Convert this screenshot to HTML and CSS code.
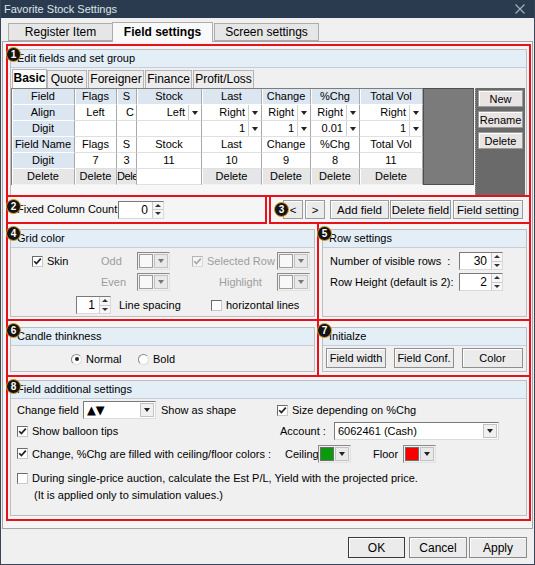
FILE: index.html
```html
<!DOCTYPE html>
<html lang="en">
<head>
    <meta charset="UTF-8">
    <title>Favorite Stock Settings</title>
    <link rel="stylesheet" href="styles.css">
</head>
<body>
<div class="window">
    <div class="titlebar">
        <span class="title">Favorite Stock Settings</span>
        <svg class="close" width="10" height="10" viewBox="0 0 10 10"><path d="M0.5 0.5 L9.5 9.5 M9.5 0.5 L0.5 9.5" stroke="#aab3bf" stroke-width="1.1"/></svg>
    </div>

    <div class="tabs">
        <div class="tab t-reg">Register Item</div>
        <div class="tab t-field active">Field settings</div>
        <div class="tab t-screen">Screen settings</div>
    </div>

    <div class="panel">
        <!-- 1: edit fields -->
        <section class="sec sec1">
            <span class="badge">1</span>
            <div class="group g1">
                <div class="ghead">Edit fields and set group</div>
                <div class="subtabs">
                    <div class="stab active w-basic">Basic</div>
                    <div class="stab w-quote">Quote</div>
                    <div class="stab w-foreign">Foreigner</div>
                    <div class="stab w-finance">Finance</div>
                    <div class="stab w-profit">Profit/Loss</div>
                </div>
                <div class="editor">
                    <div class="gridwrap">
                        <table class="fields">
                            <colgroup>
                                <col style="width:63px"><col style="width:42px"><col style="width:20px"><col style="width:65px">
                                <col style="width:60px"><col style="width:49px"><col style="width:49px"><col style="width:63px">
                            </colgroup>
                            <tr>
                                <td class="hd">Field</td><td class="hd">Flags</td><td class="hd">S</td><td class="hd">Stock</td>
                                <td class="hd">Last</td><td class="hd">Change</td><td class="hd">%Chg</td><td class="hd">Total Vol</td>
                            </tr>
                            <tr>
                                <td class="hd">Align</td><td>Left</td><td class="right">C</td>
                                <td><span class="sel">Left<i class="arr"></i></span></td>
                                <td><span class="sel">Right<i class="arr"></i></span></td>
                                <td><span class="sel">Right<i class="arr"></i></span></td>
                                <td><span class="sel">Right<i class="arr"></i></span></td>
                                <td><span class="sel">Right<i class="arr"></i></span></td>
                            </tr>
                            <tr>
                                <td class="hd">Digit</td><td></td><td></td><td></td>
                                <td><span class="sel">1<i class="arr"></i></span></td>
                                <td><span class="sel">1<i class="arr"></i></span></td>
                                <td><span class="sel">0.01<i class="arr"></i></span></td>
                                <td><span class="sel">1<i class="arr"></i></span></td>
                            </tr>
                            <tr>
                                <td class="hd">Field Name</td><td>Flags</td><td>S</td><td>Stock</td>
                                <td>Last</td><td>Change</td><td>%Chg</td><td>Total Vol</td>
                            </tr>
                            <tr>
                                <td class="hd">Digit</td><td>7</td><td>3</td><td>11</td>
                                <td>10</td><td>9</td><td>8</td><td>11</td>
                            </tr>
                            <tr>
                                <td class="del">Delete</td><td class="del">Delete</td><td class="del clip">Dele</td><td></td>
                                <td class="del">Delete</td><td class="del">Delete</td><td class="del">Delete</td><td class="del">Delete</td>
                            </tr>
                        </table>
                        <div class="graybox"></div>
                    </div>
                    <div class="side">
                        <button class="btn">New</button>
                        <button class="btn">Rename</button>
                        <button class="btn">Delete</button>
                    </div>
                </div>
            </div>
        </section>

        <div class="row">
            <!-- 2: fixed columns -->
            <section class="sec sec2">
                <span class="badge">2</span>
                <span class="lbl-fixed">Fixed Column Count</span>
                <span class="spin w46"><span class="val">0</span><span class="btns"><i class="up"></i><i class="dn"></i></span></span>
            </section>
            <!-- 3: field buttons -->
            <section class="sec sec3">
                <span class="badge b3">3</span>
                <button class="btn b-prev">&lt;</button>
                <button class="btn b-next">&gt;</button>
                <button class="btn b-add">Add field</button>
                <button class="btn b-delf">Delete field</button>
                <button class="btn b-set">Field setting</button>
            </section>
        </div>

        <div class="row">
            <!-- 4: grid color -->
            <section class="sec sec4">
                <span class="badge">4</span>
                <div class="group g4">
                    <div class="ghead">Grid color</div>
                    <div class="gc-row r1">
                        <span class="cell-a"><span class="chk on"><svg width="9" height="9" viewBox="0 0 9 9"><path d="M1.2 4.2 L3.4 6.6 L7.8 1.6" fill="none" stroke="#222" stroke-width="1.7"/></svg></span>Skin</span>
                        <span class="cell-b dim">Odd</span>
                        <span class="ccombo off"><span class="swatch"></span><span class="ddbtn"></span></span>
                        <span class="cell-c"><span class="chk on off"><svg width="9" height="9" viewBox="0 0 9 9"><path d="M1.2 4.2 L3.4 6.6 L7.8 1.6" fill="none" stroke="#a8a8a8" stroke-width="1.7"/></svg></span><span class="dim">Selected Row</span></span>
                        <span class="ccombo off"><span class="swatch"></span><span class="ddbtn"></span></span>
                    </div>
                    <div class="gc-row r2">
                        <span class="cell-a"></span>
                        <span class="cell-b dim">Even</span>
                        <span class="ccombo off"><span class="swatch"></span><span class="ddbtn"></span></span>
                        <span class="cell-c"><span class="dim hl">Highlight</span></span>
                        <span class="ccombo off"><span class="swatch"></span><span class="ddbtn"></span></span>
                    </div>
                    <div class="gc-row r3">
                        <span class="cell-d">
                            <span class="spin w34"><span class="val">1</span><span class="btns"><i class="up"></i><i class="dn"></i></span></span>
                            <span class="ls">Line spacing</span>
                        </span>
                        <span class="chk"></span>horizontal lines
                    </div>
                </div>
            </section>
            <!-- 5: row settings -->
            <section class="sec sec5">
                <span class="badge">5</span>
                <div class="group g5">
                    <div class="ghead">Row settings</div>
                    <div class="rs-row first">
                        <span class="rs-lbl">Number of visible rows&nbsp;&nbsp;:</span>
                        <span class="spin w43"><span class="val">30</span><span class="btns"><i class="up"></i><i class="dn"></i></span></span>
                    </div>
                    <div class="rs-row">
                        <span class="rs-lbl">Row Height (default is 2):</span>
                        <span class="spin w43"><span class="val">2</span><span class="btns"><i class="up"></i><i class="dn"></i></span></span>
                    </div>
                </div>
            </section>
        </div>

        <div class="row">
            <!-- 6: candle -->
            <section class="sec sec6">
                <span class="badge">6</span>
                <div class="group g6">
                    <div class="ghead">Candle thinkness</div>
                    <div class="radios">
                        <span class="radio on"></span><span class="rl">Normal</span>
                        <span class="radio"></span><span class="rl">Bold</span>
                    </div>
                </div>
            </section>
            <!-- 7: initialize -->
            <section class="sec sec7">
                <span class="badge">7</span>
                <div class="group g7">
                    <div class="ghead">Initialze</div>
                    <div class="init-btns">
                        <button class="btn">Field width</button>
                        <button class="btn">Field Conf.</button>
                        <button class="btn">Color</button>
                    </div>
                </div>
            </section>
        </div>

        <!-- 8: additional -->
        <section class="sec sec8">
            <span class="badge">8</span>
            <div class="group g8">
                <div class="ghead">Field additional settings</div>
                <div class="fa-row ra">
                    <span class="fa-left">
                        <span class="cf-lbl">Change field</span>
                        <span class="combo w73"><span class="ctext shape">▲▼</span><span class="ddbtn"></span></span>
                        <span class="sas">Show as shape</span>
                    </span>
                    <span class="chk on"><svg width="9" height="9" viewBox="0 0 9 9"><path d="M1.2 4.2 L3.4 6.6 L7.8 1.6" fill="none" stroke="#222" stroke-width="1.7"/></svg></span>Size depending on %Chg
                </div>
                <div class="fa-row rb">
                    <span class="fa-left l263"><span class="chk on"><svg width="9" height="9" viewBox="0 0 9 9"><path d="M1.2 4.2 L3.4 6.6 L7.8 1.6" fill="none" stroke="#222" stroke-width="1.7"/></svg></span>Show balloon tips</span>
                    <span class="acc-lbl">Account :</span>
                    <span class="combo w165"><span class="ctext">6062461 (Cash)</span><span class="ddbtn"></span></span>
                </div>
                <div class="fa-row rc">
                    <span class="fa-left l268"><span class="chk on"><svg width="9" height="9" viewBox="0 0 9 9"><path d="M1.2 4.2 L3.4 6.6 L7.8 1.6" fill="none" stroke="#222" stroke-width="1.7"/></svg></span>Change, %Chg are filled with ceiling/floor colors :</span>
                    <span class="ceil-lbl">Ceiling</span>
                    <span class="ccombo"><span class="swatch green"></span><span class="ddbtn"></span></span>
                    <span class="floor-lbl">Floor</span>
                    <span class="ccombo"><span class="swatch red"></span><span class="ddbtn"></span></span>
                </div>
                <div class="fa-row rd">
                    <span class="chk"></span>During single-price auction, calculate the Est P/L, Yield with the projected price.
                </div>
                <div class="fa-row re">(It is applied only to simulation values.)</div>
            </div>
        </section>
    </div>

    <div class="footer">
        <button class="btn dlg default">OK</button>
        <button class="btn dlg b-cancel">Cancel</button>
        <button class="btn dlg b-apply">Apply</button>
    </div>
</div>
</body>
</html>
```

FILE: styles.css
```css
* {
    box-sizing: border-box;
}
body {
    margin: 0;
    font-family: "Liberation Sans", Arial, sans-serif;
    font-size: 11px;
    color: #000;
    background: #fff;
}
.window {
    width: 535px;
    height: 565px;
    background: #f0f0f0;
    border: 1px solid #3a4657;
    border-top: none;
    overflow: hidden;
}
.titlebar {
    height: 18px;
    margin: 0 -1px;
    background: #2a3b50;
    color: #dfe4ea;
    display: flex;
    align-items: center;
    justify-content: space-between;
    padding: 0 10px 0 4px;
}
.close {
    display: block;
}

/* main tabs */
.tabs {
    display: flex;
    height: 20px;
    margin-top: 4px;
    padding-left: 7px;
    position: relative;
    z-index: 1;
}
.tab {
    height: 18px;
    margin-top: 1px;
    border: 1px solid #adadad;
    background: #e6e6e6;
    text-align: center;
    line-height: 17px;
    font-size: 12px;
}
.tab.active {
    height: 20px;
    margin-top: 0;
    background: #f9f9f9;
    border-bottom: none;
    font-weight: bold;
    line-height: 19px;
}
.t-reg { width: 105px; }
.t-field { width: 101px; margin-left: -1px; }
.t-screen { width: 105px; margin-left: 1px; }

.panel {
    margin: -1px 0 0 1px;
    width: 531px;
    height: 488px;
    border: 1px solid #a6a6a6;
    background: #f5f5f5;
    padding: 2px 0 0 3px;
}

/* red numbered sections */
.sec {
    position: relative;
    border: 2px solid #e8111b;
}
.row {
    display: flex;
}
.badge {
    position: absolute;
    left: -2px;
    top: 2px;
    width: 15px;
    height: 15px;
    border-radius: 50%;
    background: #141414;
    border: 1.5px solid #e79b16;
    color: #fff;
    font-weight: bold;
    font-size: 10px;
    display: flex;
    align-items: center;
    justify-content: center;
    z-index: 2;
}
.sec1 .badge {
    top: 1px;
}
.badge.b3 {
    left: 3px;
    top: 5px;
}

.group {
    border: 1px solid #bdbdbd;
    background: #f0f0f0;
}
.ghead {
    height: 18px;
    background: #e3eef7;
    border-bottom: 1px solid #c5ced8;
    padding-left: 6px;
    line-height: 17px;
}

/* 1 */
.sec1 {
    width: 525px;
    height: 153px;
    padding: 3px 2px 0 2px;
}
.g1 {
    height: 146px;
    border-bottom: none;
}
.subtabs {
    display: flex;
    height: 19px;
    margin-top: 1px;
    padding-left: 1px;
    align-items: flex-end;
}
.stab {
    height: 18px;
    border: 1px solid #b5b5b5;
    border-bottom: none;
    background: #ececec;
    text-align: center;
    line-height: 17px;
    font-size: 12px;
}
.stab.active {
    height: 19px;
    background: #fbfbfb;
    font-weight: bold;
}
.w-basic { width: 35px; }
.w-quote { width: 40px; }
.w-foreign { width: 56px; margin-left: 1px; }
.w-finance { width: 47px; margin-left: 1px; }
.w-profit { width: 61px; margin-left: 1px; }

.editor {
    display: flex;
    height: 107px;
}
.gridwrap {
    display: flex;
    align-items: flex-start;
    width: 464px;
    background: #f7f7f7;
}
.fields {
    table-layout: fixed;
    width: 412px;
    border-spacing: 0;
    border-left: 1px solid #7d7d7d;
    border-top: 1px solid #7d7d7d;
    background: #fff;
}
.fields td {
    height: 16px;
    padding: 0 1px;
    border-right: 1px solid #a9a9a9;
    border-bottom: 1px solid #e0e0e0;
    text-align: center;
    white-space: nowrap;
    overflow: hidden;
    line-height: 15px;
}
.fields td.hd {
    background: #dce6f1;
    border-bottom-color: #fff;
    box-shadow: inset 1px 0 #fff;
}
.fields td.del {
    background: #e6e6e6;
    border-bottom-color: #f4f4f4;
    box-shadow: inset 1px 0 #fff;
}
.fields td.right {
    text-align: right;
    padding-right: 2px;
}
.fields td.clip {
    text-align: left;
    padding: 0;
    letter-spacing: -0.4px;
}
.sel {
    display: flex;
    justify-content: flex-end;
    align-items: center;
    height: 15px;
}
.arr {
    width: 12px;
    height: 15px;
    margin-left: 3px;
    border-left: 1px solid #d0d0d0;
    display: flex;
    align-items: center;
    justify-content: center;
}
.arr::after,
.ddbtn::after {
    content: "";
    border-left: 3.5px solid transparent;
    border-right: 3.5px solid transparent;
    border-top: 4px solid #222;
}
.graybox {
    width: 51px;
    height: 97px;
    background: #7b7b7b;
    border: 1px solid #4d4d4d;
    border-right-color: #5a5a5a;
}
.side {
    width: 50px;
    height: 107px;
    background: #6a6a6a;
    padding-top: 2px;
    border-left: 1px dotted #9a9a9a;
}
.side .btn {
    display: block;
    width: 45px;
    height: 17px;
    margin: 0 0 4px 2px;
    background: #e8e4e4;
}

/* buttons */
.btn {
    font-family: inherit;
    font-size: 11px;
    color: #000;
    background: #ebebeb;
    border: 1px solid #9b9b9b;
    box-shadow: inset 1px 1px #fff;
    padding: 0;
    white-space: nowrap;
}

/* 2 */
.sec2 {
    width: 261px;
    height: 27px;
    border-top: none;
    display: flex;
    align-items: center;
}
.lbl-fixed {
    width: 110px;
    padding-left: 9px;
    padding-bottom: 1px;
}

/* spinners */
.spin {
    display: inline-flex;
    height: 18px;
    border: 1px solid;
    border-color: #7a7a7a #d9d9d9 #d9d9d9 #7a7a7a;
    background: #fff;
}
.spin .val {
    flex: 1;
    text-align: right;
    padding-right: 4px;
    line-height: 17px;
    font-size: 12px;
}
.spin .btns {
    width: 11px;
    display: flex;
    flex-direction: column;
    border-left: 1px solid #c9c9c9;
    background: #f6f6f6;
}
.spin .btns i {
    flex: 1;
    display: flex;
    align-items: center;
    justify-content: center;
}
.spin .btns i + i {
    border-top: 1px solid #c9c9c9;
}
.up::after {
    content: "";
    border-left: 3px solid transparent;
    border-right: 3px solid transparent;
    border-bottom: 3px solid #333;
}
.dn::after {
    content: "";
    border-left: 3px solid transparent;
    border-right: 3px solid transparent;
    border-top: 3px solid #333;
}
.w46 { width: 46px; }
.w34 { width: 35px; }
.w43 { width: 44px; }

/* 3 */
.sec3 {
    width: 262px;
    height: 27px;
    margin-left: 2px;
    border-top: none;
    display: flex;
    align-items: flex-start;
    padding: 3px 0 0 12px;
}
.sec3 .btn {
    height: 19px;
    font-size: 11.5px;
}
.b-prev { width: 20px; }
.b-next { width: 20px; margin-left: 2px; }
.b-add { width: 59px; margin-left: 5px; }
.b-delf { width: 61px; margin-left: 1px; }
.b-set { width: 70px; margin-left: 2px; }

/* 4 */
.sec4 {
    width: 313px;
    height: 97px;
    border-top: none;
    padding: 5px 2px 0 2px;
}
.g4 {
    height: 88px;
}
.gc-row {
    display: flex;
    align-items: center;
    height: 18px;
}
.gc-row.r1 { margin-top: 4px; }
.gc-row.r2 { margin-top: 3px; }
.gc-row.r3 { margin-top: 5px; }
.cell-a {
    width: 90px;
    padding-left: 21px;
    display: flex;
    align-items: center;
}
.cell-b {
    width: 36px;
}
.cell-c {
    width: 107px;
    padding-left: 22px;
    display: flex;
    align-items: center;
}
.cell-d {
    width: 200px;
    padding-left: 65px;
    display: flex;
    align-items: center;
}
.ls {
    margin-left: 8px;
}
.hl {
    margin-left: 27px;
}
.dim {
    color: #9d9d9d;
}

/* checkboxes and radios */
.chk {
    width: 11px;
    height: 11px;
    margin-right: 4px;
    border: 1px solid;
    border-color: #6c6c6c #c9c9c9 #c9c9c9 #6c6c6c;
    background: #fff;
    display: inline-flex;
    align-items: center;
    justify-content: center;
    flex: none;
}
.chk.off {
    border-color: #b4b4b4 #dadada #dadada #b4b4b4;
    background: #f4f4f4;
}
.radio {
    width: 11px;
    height: 11px;
    border-radius: 50%;
    border: 1px solid;
    border-color: #8a8a8a #dcdcdc #dcdcdc #8a8a8a;
    background: #fff;
    display: inline-flex;
    align-items: center;
    justify-content: center;
}
.radio.on::after {
    content: "";
    width: 4px;
    height: 4px;
    border-radius: 50%;
    background: #222;
}

/* color combos */
.ccombo {
    display: inline-flex;
    align-items: center;
    width: 33px;
    height: 18px;
    padding: 1px;
    border: 1px solid;
    border-color: #8a8a8a #e2e2e2 #e2e2e2 #8a8a8a;
    flex: none;
}
.swatch {
    width: 15px;
    height: 14px;
    border: 1px solid #6e6e6e;
    background: #fff;
}
.swatch.green { background: #0b9a0b; }
.swatch.red { background: #f70000; }
.ddbtn {
    width: 14px;
    height: 14px;
    margin-left: 1px;
    background: #e9e9e9;
    border: 1px solid #c2c2c2;
    display: flex;
    align-items: center;
    justify-content: center;
    flex: none;
}
.ccombo.off .swatch {
    border-color: #9c9c9c;
    background: #f8f8f8;
}
.ccombo.off .ddbtn::after {
    border-top-color: #777;
}

/* 5 */
.sec5 {
    width: 212px;
    height: 97px;
    border-top: none;
    border-left: none;
    padding: 5px 2px 0 3px;
}
.g5 {
    height: 88px;
}
.rs-row {
    display: flex;
    align-items: center;
    height: 18px;
    margin-top: 3px;
    padding-left: 7px;
    white-space: nowrap;
}
.rs-row.first {
    margin-top: 4px;
}
.rs-lbl {
    width: 129px;
}

/* 6 / 7 */
.sec6 {
    width: 313px;
    height: 56px;
    border-top: none;
    padding: 6px 2px 0 2px;
}
.g6,
.g7 {
    height: 45px;
}
.radios {
    display: flex;
    align-items: center;
    height: 16px;
    margin-top: 5px;
    padding-left: 60px;
}
.rl {
    margin-left: 4px;
    width: 52px;
}
.sec7 {
    width: 212px;
    height: 56px;
    border-top: none;
    border-left: none;
    padding: 6px 2px 0 3px;
}
.init-btns {
    display: flex;
    margin-top: 2px;
    padding-left: 3px;
}
.init-btns .btn {
    width: 60px;
    height: 20px;
    margin-right: 8px;
    border-color: #8f8f8f;
}
.init-btns .btn:last-child {
    width: 61px;
    margin-right: 0;
}

/* 8 */
.sec8 {
    width: 525px;
    height: 144px;
    border-top: none;
    padding: 3px 2px 0 2px;
}
.g8 {
    height: 136px;
}
.fa-row {
    display: flex;
    align-items: center;
    padding-left: 6px;
    white-space: nowrap;
}
.fa-row.ra { height: 18px; margin-top: 2px; }
.fa-row.rb { height: 18px; margin-top: 3px; }
.fa-row.rc { height: 19px; margin-top: 4px; }
.fa-row.rd { height: 16px; margin-top: 7px; }
.fa-row.re { height: 15px; margin-top: 1px; padding-left: 23px; }
.fa-left {
    width: 260px;
    display: flex;
    align-items: center;
    flex: none;
}
.fa-left.l263 { width: 263px; }
.fa-left.l268 { width: 268px; }
.cf-lbl { width: 66px; }
.sas { margin-left: 5px; }
.acc-lbl { width: 54px; }
.ceil-lbl { width: 33px; }
.floor-lbl { width: 30px; margin-left: 22px; }

.combo {
    display: inline-flex;
    align-items: center;
    height: 18px;
    padding: 1px;
    border: 1px solid;
    border-color: #7a7a7a #dcdcdc #dcdcdc #7a7a7a;
    background: #fff;
}
.combo .ctext {
    flex: 1;
    padding-left: 2px;
}
.combo .ctext.shape {
    font-family: "DejaVu Sans", sans-serif;
    font-size: 11.5px;
    letter-spacing: 0;
    padding-left: 2px;
    line-height: 14px;
}
.combo .ddbtn {
    height: 14px;
    background: #f0f0f0;
}
.w73 { width: 73px; }
.w165 { width: 165px; }

/* dialog buttons */
.footer {
    display: flex;
    justify-content: flex-end;
    margin-top: 8px;
    padding-right: 7px;
}
.btn.dlg {
    height: 21px;
    width: 58px;
    font-size: 12px;
    border-color: #8a8a8a;
}
.btn.default {
    width: 57px;
    border-color: #3a3a3a;
}
.b-cancel { margin-left: 4px; }
.b-apply { margin-left: 2px; }
```
